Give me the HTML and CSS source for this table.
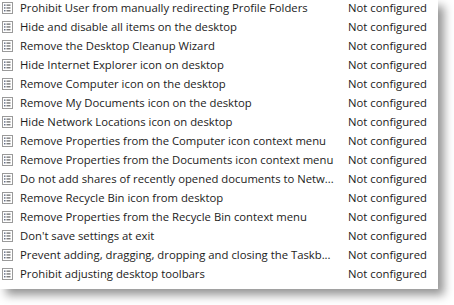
FILE: index.html
```html
<!DOCTYPE html>
<html>
<head>
<meta charset="utf-8">
<link rel="stylesheet" href="styles.css">
</head>
<body>
<div class="panel">
  <div class="list">
    <div class="row"><span class="ico"><svg width="11" height="12" viewBox="0 0 11 12"><rect x="0.5" y="0.5" width="10" height="11" fill="#fff" stroke="#9a9a9a"/><g fill="#55607a"><rect x="2" y="2.5" width="1.5" height="1.3"/><rect x="2" y="5.3" width="1.5" height="1.3"/><rect x="2" y="8.1" width="1.5" height="1.3"/></g><g fill="#707070"><rect x="4.5" y="2.5" width="4" height="1.3"/><rect x="4.5" y="5.3" width="4" height="1.3"/><rect x="4.5" y="8.1" width="4" height="1.3"/></g></svg></span><span class="name">Prohibit User from manually redirecting Profile Folders</span><span class="state">Not configured</span></div>
    <div class="row"><span class="ico"><svg width="11" height="12" viewBox="0 0 11 12"><rect x="0.5" y="0.5" width="10" height="11" fill="#fff" stroke="#9a9a9a"/><g fill="#55607a"><rect x="2" y="2.5" width="1.5" height="1.3"/><rect x="2" y="5.3" width="1.5" height="1.3"/><rect x="2" y="8.1" width="1.5" height="1.3"/></g><g fill="#707070"><rect x="4.5" y="2.5" width="4" height="1.3"/><rect x="4.5" y="5.3" width="4" height="1.3"/><rect x="4.5" y="8.1" width="4" height="1.3"/></g></svg></span><span class="name">Hide and disable all items on the desktop</span><span class="state">Not configured</span></div>
    <div class="row"><span class="ico"><svg width="11" height="12" viewBox="0 0 11 12"><rect x="0.5" y="0.5" width="10" height="11" fill="#fff" stroke="#9a9a9a"/><g fill="#55607a"><rect x="2" y="2.5" width="1.5" height="1.3"/><rect x="2" y="5.3" width="1.5" height="1.3"/><rect x="2" y="8.1" width="1.5" height="1.3"/></g><g fill="#707070"><rect x="4.5" y="2.5" width="4" height="1.3"/><rect x="4.5" y="5.3" width="4" height="1.3"/><rect x="4.5" y="8.1" width="4" height="1.3"/></g></svg></span><span class="name">Remove the Desktop Cleanup Wizard</span><span class="state">Not configured</span></div>
    <div class="row"><span class="ico"><svg width="11" height="12" viewBox="0 0 11 12"><rect x="0.5" y="0.5" width="10" height="11" fill="#fff" stroke="#9a9a9a"/><g fill="#55607a"><rect x="2" y="2.5" width="1.5" height="1.3"/><rect x="2" y="5.3" width="1.5" height="1.3"/><rect x="2" y="8.1" width="1.5" height="1.3"/></g><g fill="#707070"><rect x="4.5" y="2.5" width="4" height="1.3"/><rect x="4.5" y="5.3" width="4" height="1.3"/><rect x="4.5" y="8.1" width="4" height="1.3"/></g></svg></span><span class="name">Hide Internet Explorer icon on desktop</span><span class="state">Not configured</span></div>
    <div class="row"><span class="ico"><svg width="11" height="12" viewBox="0 0 11 12"><rect x="0.5" y="0.5" width="10" height="11" fill="#fff" stroke="#9a9a9a"/><g fill="#55607a"><rect x="2" y="2.5" width="1.5" height="1.3"/><rect x="2" y="5.3" width="1.5" height="1.3"/><rect x="2" y="8.1" width="1.5" height="1.3"/></g><g fill="#707070"><rect x="4.5" y="2.5" width="4" height="1.3"/><rect x="4.5" y="5.3" width="4" height="1.3"/><rect x="4.5" y="8.1" width="4" height="1.3"/></g></svg></span><span class="name">Remove Computer icon on the desktop</span><span class="state">Not configured</span></div>
    <div class="row"><span class="ico"><svg width="11" height="12" viewBox="0 0 11 12"><rect x="0.5" y="0.5" width="10" height="11" fill="#fff" stroke="#9a9a9a"/><g fill="#55607a"><rect x="2" y="2.5" width="1.5" height="1.3"/><rect x="2" y="5.3" width="1.5" height="1.3"/><rect x="2" y="8.1" width="1.5" height="1.3"/></g><g fill="#707070"><rect x="4.5" y="2.5" width="4" height="1.3"/><rect x="4.5" y="5.3" width="4" height="1.3"/><rect x="4.5" y="8.1" width="4" height="1.3"/></g></svg></span><span class="name">Remove My Documents icon on the desktop</span><span class="state">Not configured</span></div>
    <div class="row"><span class="ico"><svg width="11" height="12" viewBox="0 0 11 12"><rect x="0.5" y="0.5" width="10" height="11" fill="#fff" stroke="#9a9a9a"/><g fill="#55607a"><rect x="2" y="2.5" width="1.5" height="1.3"/><rect x="2" y="5.3" width="1.5" height="1.3"/><rect x="2" y="8.1" width="1.5" height="1.3"/></g><g fill="#707070"><rect x="4.5" y="2.5" width="4" height="1.3"/><rect x="4.5" y="5.3" width="4" height="1.3"/><rect x="4.5" y="8.1" width="4" height="1.3"/></g></svg></span><span class="name">Hide Network Locations icon on desktop</span><span class="state">Not configured</span></div>
    <div class="row"><span class="ico"><svg width="11" height="12" viewBox="0 0 11 12"><rect x="0.5" y="0.5" width="10" height="11" fill="#fff" stroke="#9a9a9a"/><g fill="#55607a"><rect x="2" y="2.5" width="1.5" height="1.3"/><rect x="2" y="5.3" width="1.5" height="1.3"/><rect x="2" y="8.1" width="1.5" height="1.3"/></g><g fill="#707070"><rect x="4.5" y="2.5" width="4" height="1.3"/><rect x="4.5" y="5.3" width="4" height="1.3"/><rect x="4.5" y="8.1" width="4" height="1.3"/></g></svg></span><span class="name">Remove Properties from the Computer icon context menu</span><span class="state">Not configured</span></div>
    <div class="row"><span class="ico"><svg width="11" height="12" viewBox="0 0 11 12"><rect x="0.5" y="0.5" width="10" height="11" fill="#fff" stroke="#9a9a9a"/><g fill="#55607a"><rect x="2" y="2.5" width="1.5" height="1.3"/><rect x="2" y="5.3" width="1.5" height="1.3"/><rect x="2" y="8.1" width="1.5" height="1.3"/></g><g fill="#707070"><rect x="4.5" y="2.5" width="4" height="1.3"/><rect x="4.5" y="5.3" width="4" height="1.3"/><rect x="4.5" y="8.1" width="4" height="1.3"/></g></svg></span><span class="name">Remove Properties from the Documents icon context menu</span><span class="state">Not configured</span></div>
    <div class="row"><span class="ico"><svg width="11" height="12" viewBox="0 0 11 12"><rect x="0.5" y="0.5" width="10" height="11" fill="#fff" stroke="#9a9a9a"/><g fill="#55607a"><rect x="2" y="2.5" width="1.5" height="1.3"/><rect x="2" y="5.3" width="1.5" height="1.3"/><rect x="2" y="8.1" width="1.5" height="1.3"/></g><g fill="#707070"><rect x="4.5" y="2.5" width="4" height="1.3"/><rect x="4.5" y="5.3" width="4" height="1.3"/><rect x="4.5" y="8.1" width="4" height="1.3"/></g></svg></span><span class="name">Do not add shares of recently opened documents to Netw...</span><span class="state">Not configured</span></div>
    <div class="row"><span class="ico"><svg width="11" height="12" viewBox="0 0 11 12"><rect x="0.5" y="0.5" width="10" height="11" fill="#fff" stroke="#9a9a9a"/><g fill="#55607a"><rect x="2" y="2.5" width="1.5" height="1.3"/><rect x="2" y="5.3" width="1.5" height="1.3"/><rect x="2" y="8.1" width="1.5" height="1.3"/></g><g fill="#707070"><rect x="4.5" y="2.5" width="4" height="1.3"/><rect x="4.5" y="5.3" width="4" height="1.3"/><rect x="4.5" y="8.1" width="4" height="1.3"/></g></svg></span><span class="name">Remove Recycle Bin icon from desktop</span><span class="state">Not configured</span></div>
    <div class="row"><span class="ico"><svg width="11" height="12" viewBox="0 0 11 12"><rect x="0.5" y="0.5" width="10" height="11" fill="#fff" stroke="#9a9a9a"/><g fill="#55607a"><rect x="2" y="2.5" width="1.5" height="1.3"/><rect x="2" y="5.3" width="1.5" height="1.3"/><rect x="2" y="8.1" width="1.5" height="1.3"/></g><g fill="#707070"><rect x="4.5" y="2.5" width="4" height="1.3"/><rect x="4.5" y="5.3" width="4" height="1.3"/><rect x="4.5" y="8.1" width="4" height="1.3"/></g></svg></span><span class="name">Remove Properties from the Recycle Bin context menu</span><span class="state">Not configured</span></div>
    <div class="row"><span class="ico"><svg width="11" height="12" viewBox="0 0 11 12"><rect x="0.5" y="0.5" width="10" height="11" fill="#fff" stroke="#9a9a9a"/><g fill="#55607a"><rect x="2" y="2.5" width="1.5" height="1.3"/><rect x="2" y="5.3" width="1.5" height="1.3"/><rect x="2" y="8.1" width="1.5" height="1.3"/></g><g fill="#707070"><rect x="4.5" y="2.5" width="4" height="1.3"/><rect x="4.5" y="5.3" width="4" height="1.3"/><rect x="4.5" y="8.1" width="4" height="1.3"/></g></svg></span><span class="name">Don't save settings at exit</span><span class="state">Not configured</span></div>
    <div class="row"><span class="ico"><svg width="11" height="12" viewBox="0 0 11 12"><rect x="0.5" y="0.5" width="10" height="11" fill="#fff" stroke="#9a9a9a"/><g fill="#55607a"><rect x="2" y="2.5" width="1.5" height="1.3"/><rect x="2" y="5.3" width="1.5" height="1.3"/><rect x="2" y="8.1" width="1.5" height="1.3"/></g><g fill="#707070"><rect x="4.5" y="2.5" width="4" height="1.3"/><rect x="4.5" y="5.3" width="4" height="1.3"/><rect x="4.5" y="8.1" width="4" height="1.3"/></g></svg></span><span class="name">Prevent adding, dragging, dropping and closing the Taskb...</span><span class="state">Not configured</span></div>
    <div class="row"><span class="ico"><svg width="11" height="12" viewBox="0 0 11 12"><rect x="0.5" y="0.5" width="10" height="11" fill="#fff" stroke="#9a9a9a"/><g fill="#55607a"><rect x="2" y="2.5" width="1.5" height="1.3"/><rect x="2" y="5.3" width="1.5" height="1.3"/><rect x="2" y="8.1" width="1.5" height="1.3"/></g><g fill="#707070"><rect x="4.5" y="2.5" width="4" height="1.3"/><rect x="4.5" y="5.3" width="4" height="1.3"/><rect x="4.5" y="8.1" width="4" height="1.3"/></g></svg></span><span class="name">Prohibit adjusting desktop toolbars</span><span class="state">Not configured</span></div>
  </div>
</div>
</body>
</html>
```
FILE: styles.css
```css
html, body {
  margin: 0;
  padding: 0;
  background: #fff;
  overflow: hidden;
}
body {
  width: 454px;
  height: 305px;
  font-family: "Open Sans", "Noto Sans", sans-serif;
  font-size: 11.3px;
  color: #1b1b1b;
}
.panel {
  width: 438px;
  height: 289px;
  background: #fff;
  box-shadow: 6px 6px 9px rgba(0, 0, 0, 0.42);
  overflow: hidden;
}
.list {
  display: flex;
  flex-direction: column;
  margin-top: -2px;
}
.row {
  display: grid;
  grid-template-columns: 20px 328px 1fr;
  height: 19px;
  align-items: center;
  white-space: nowrap;
}
.ico {
  display: flex;
  padding-left: 2px;
}
.ico svg { display: block; }
.name {
  overflow: hidden;
  padding-right: 4px;
}
.state {
  white-space: nowrap;
}
```
